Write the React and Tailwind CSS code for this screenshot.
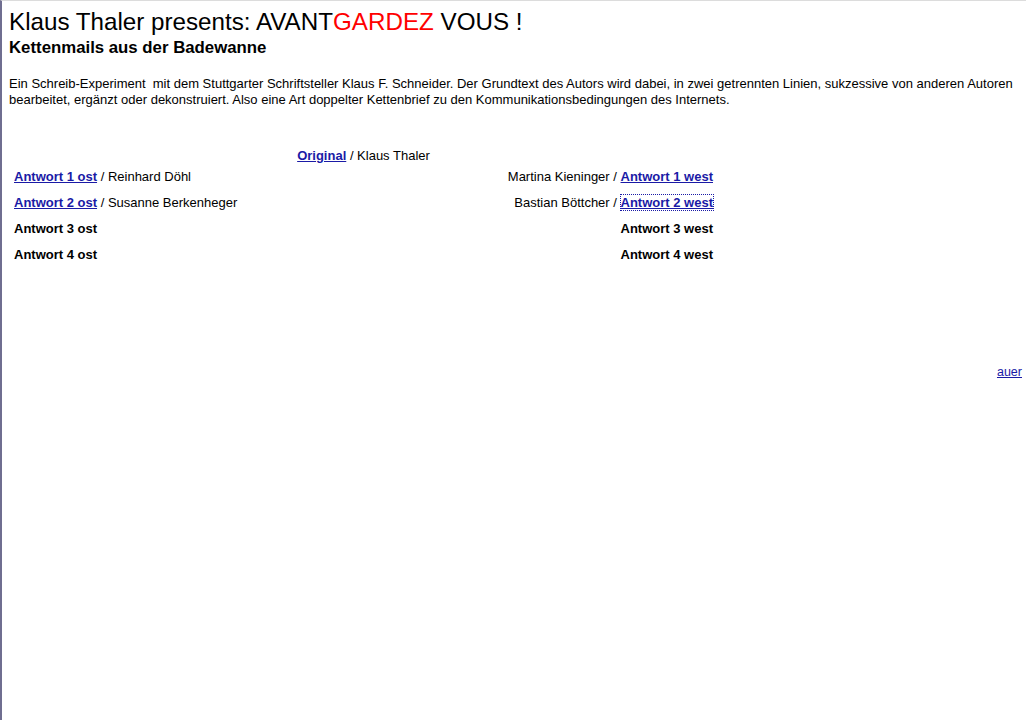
export default function App() {
  return (
    <div className="min-h-[720px] border-l-2 border-l-[#6f6e90] border-t border-t-[#dcdcdc] bg-white pl-[7px] pr-[4px] font-['Liberation_Sans',Arial,sans-serif] text-black">
      <h1 className="pt-[7px] text-[24.2px] leading-[28px]">
        Klaus Thaler presents: AVANT<span className="text-[#ff0000]">GARDEZ</span> VOUS !
      </h1>
      <h2 className="mt-[2px] text-[16.8px] font-bold leading-[20px]">Kettenmails aus der Badewanne</h2>
      <p className="mt-[18px] whitespace-nowrap text-[13px] leading-[16px]">
        Ein Schreib-Experiment&nbsp; mit dem Stuttgarter Schriftsteller Klaus F. Schneider. Der Grundtext des Autors wird dabei, in zwei getrennten Linien, sukzessive von anderen Autoren
        <br />
        bearbeitet, ergänzt oder dekonstruiert. Also eine Art doppelter Kettenbrief zu den Kommunikationsbedingungen des Internets.
      </p>

      <div className="ml-[5px] mt-[40px] flex w-[699px] flex-col text-[13px] leading-[16px]">
        <div className="text-center">
          <a href="#" className="font-bold text-[#1a1aa6] underline">Original</a> / Klaus Thaler
        </div>
        <div className="mt-[5px] flex justify-between">
          <span>
            <a href="#" className="font-bold text-[#1a1aa6] underline">Antwort 1 ost</a> / Reinhard Döhl
          </span>
          <span>
            Martina Kieninger / <a href="#" className="font-bold text-[#1a1aa6] underline">Antwort 1 west</a>
          </span>
        </div>
        <div className="mt-[10px] flex justify-between">
          <span>
            <a href="#" className="font-bold text-[#1a1aa6] underline">Antwort 2 ost</a> / Susanne Berkenheger
          </span>
          <span>
            Bastian Böttcher /{' '}
            <a href="#" className="font-bold text-[#1a1aa6] underline outline-1 outline-dotted outline-[#1a1aa6]">Antwort 2 west</a>
          </span>
        </div>
        <div className="mt-[10px] flex justify-between font-bold">
          <span>Antwort 3 ost</span>
          <span>Antwort 3 west</span>
        </div>
        <div className="mt-[10px] flex justify-between font-bold">
          <span>Antwort 4 ost</span>
          <span>Antwort 4 west</span>
        </div>
      </div>

      <p className="mt-[101px] text-right text-[12.5px] leading-[16px]">
        <a href="#" className="text-[#1a1aa6] underline">auer</a>
      </p>
    </div>
  );
}
